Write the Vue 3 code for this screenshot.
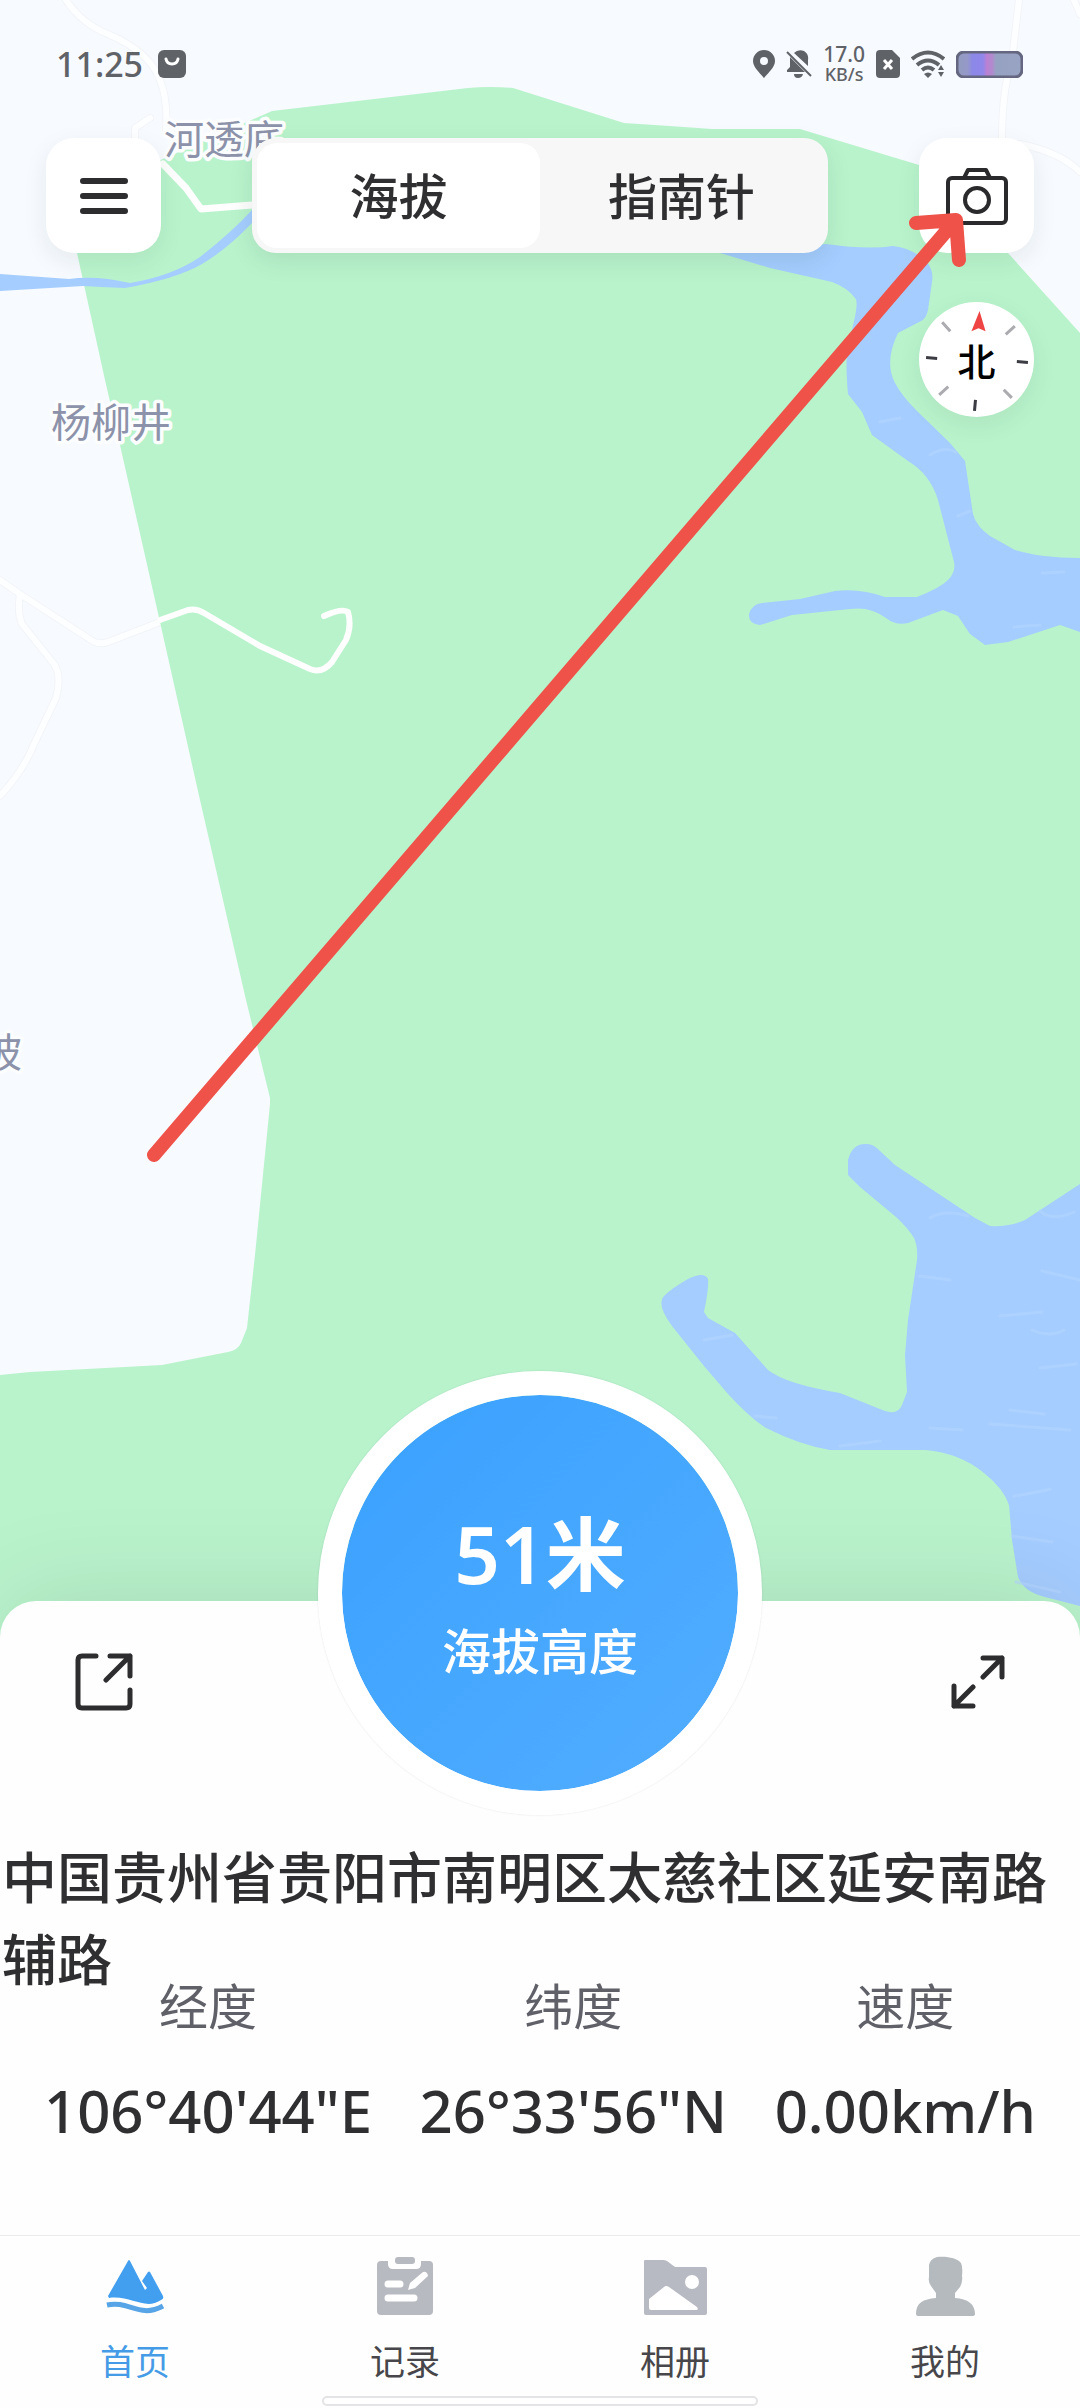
<script setup>
import { ref } from 'vue'

const modes = ['海拔', '指南针']
const mode = ref('海拔')

const metrics = [
  { label: '经度', value: '106°40\'44"E' },
  { label: '纬度', value: '26°33\'56"N' },
  { label: '速度', value: '0.00km/h' },
]

const tabs = [
  { id: 'home', label: '首页' },
  { id: 'log', label: '记录' },
  { id: 'album', label: '相册' },
  { id: 'me', label: '我的' },
]
const activeTab = ref('home')
</script>

<template>
  <div class="app">
    <main class="map-area">
      <svg class="map" viewBox="0 0 1080 1660" preserveAspectRatio="xMidYMin slice" aria-hidden="true">
        <rect width="1080" height="1660" fill="#f7faff" />
        <!-- faint roads outside the park -->
        <g fill="none" stroke-linejoin="round" stroke-linecap="round">
          <g stroke="#f2f4f8" stroke-width="8">
            <path d="M66 0Q82 24 108 34Q150 52 160 80Q168 100 166 130M150 118L135 128V140" />
            <path d="M1019 0L1012 60Q1002 90 1002 140M1020 144Q1060 152 1080 172M1074 0L1080 14" />
            <path d="M0 580L20 594L88 638Q98 646 108 642L160 622M20 594Q17 612 22 624L54 664Q62 676 56 698L34 744Q24 770 0 796" />
          </g>
          <g stroke="#fdfeff" stroke-width="6">
            <path d="M66 0Q82 24 108 34Q150 52 160 80Q168 100 166 130M150 118L135 128V140" />
            <path d="M1019 0L1012 60Q1002 90 1002 140M1020 144Q1060 152 1080 172M1074 0L1080 14" />
            <path d="M0 580L20 594L88 638Q98 646 108 642L160 622M20 594Q17 612 22 624L54 664Q62 676 56 698L34 744Q24 770 0 796" />
          </g>
        </g>
        <!-- park -->
        <path fill="#b9f3cc" d="M272 111L468 88Q490 86 513 88L624 123Q670 126 712 129H800L919 165L1008 253L1080 333V1660H0V1375L30 1372L162 1365L228 1352Q238 1350 241 1343L247 1328L255 1255L270 1104V1098L246 1000L200 800L160 622L120 445L105 380L77 253L72 200L165 158L240 125Z" />
        <g fill="none" stroke="#fdfefd" stroke-linejoin="round" stroke-linecap="round">
          <path stroke-width="7" d="M163 164L186 188L201 209L252 205" />
          <path stroke-width="6" d="M160 620L188 610Q196 608 204 613L260 646L310 669Q322 674 332 662L346 640Q352 626 348 612Q342 608 324 616" />
        </g>
        <!-- water -->
        <g fill="#a5cdff">
          <path d="M0 274L69 279Q95 275 130 283Q172 276 200 257Q232 232 252 210V223Q226 250 202 264Q176 279 125 288Q100 287 83 286L0 291Z" />
          <path d="M720 253L826 244Q868 250 893 246Q912 248 926 261Q934 270 932 282L928 310Q926 319 921 321L898 333Q884 362 895 383Q902 396 916 410L950 443L965 461L973 514Q976 526 990 536L1015 550Q1040 558 1080 558V632L1060 625L1008 642L985 645L970 634L958 616L943 610L908 623Q896 626 886 618Q870 606 850 609L792 615L760 625Q748 624 749 614Q752 604 762 603L800 599L835 591Q860 588 885 597H917Q940 588 948 580Q956 572 954 562L938 500Q930 474 908 461L872 435L862 412L848 394Q845 360 848 350L853 325Q859 302 855 298Q848 288 832 282L770 268Z" />
          <path d="M848 1160Q852 1144 865 1144Q873 1143 880 1151L895 1165L975 1218L990 1226Q1010 1227 1025 1220L1080 1184V1606L1045 1597Q1024 1592 1018 1577L1012 1540L1009 1505Q1004 1489 984 1473Q960 1453 925 1450H830Q800 1445 766 1428Q750 1418 728 1394L704 1366L672 1326Q656 1304 664 1296Q672 1288 688 1279Q704 1271 708 1279Q709 1288 704 1312L708 1318L735 1333L768 1370Q786 1384 840 1393L885 1411Q898 1415 902 1405L907 1392L905 1355L908 1320L917 1260Q918 1246 914 1238Q908 1228 896 1217L860 1187L848 1175Z" />
        </g>
        <g fill="none" stroke="#b4d6ff" stroke-width="3" stroke-linecap="round" opacity="0.6">
          <path d="M930 1218Q945 1209 968 1216M1040 1211Q1052 1222 1074 1212M920 1276L950 1280M1042 1271L1080 1280M1000 1316L1042 1312M1040 1368L1076 1364M1010 1410L1044 1414M930 1428L962 1430M990 1424L1070 1430M704 1340L732 1335M755 1416L776 1418M840 1446L880 1441M1014 1496Q1030 1494 1050 1489M1012 1536L1052 1542M1016 1582L1060 1592M1032 1330Q1050 1338 1064 1330M930 455Q944 446 956 452M1042 573L1064 572M958 516L970 511M880 422L900 418M1014 627L1040 625" />
        </g>
        <g class="place">
          <text x="164" y="154">河透底</text>
          <text x="51" y="437">杨柳井</text>
          <text x="-18" y="1067">坡</text>
        </g>
      </svg>

      <header class="overlay">
        <div class="status">
          <div class="status-side">
            <span class="clock">11:25</span>
            <svg width="28" height="28" viewBox="0 0 28 28"><rect width="28" height="28" rx="6" fill="#5f6267" /><path d="M8 9Q9 14 14 14T20 9" fill="none" stroke="#fff" stroke-width="3" stroke-linecap="round" /></svg>
          </div>
          <div class="status-side icons">
            <svg width="22" height="28" viewBox="0 0 22 28"><path fill="#5f6267" fill-rule="evenodd" d="M11 0A11 11 0 0 1 22 11C22 17 16 22 11 28C6 22 0 17 0 11A11 11 0 0 1 11 0ZM11 7A4 4 0 1 0 11 15A4 4 0 1 0 11 7Z" /></svg>
            <svg width="26" height="28" viewBox="0 0 26 28"><path fill="#5f6267" d="M8 3Q12 -1 18 1Q23 4 22 10V16ZM4 7L19 22H1V20L4 17ZM8 24H17Q16 28 12 28T8 24Z" /><path d="M1 2L25 26" stroke="#5f6267" stroke-width="2" /></svg>
            <span class="speed"><b>17.0</b><small>KB/s</small></span>
            <svg width="24" height="28" viewBox="0 0 24 28"><path fill="#5f6267" d="M4 0H16L24 8V24Q24 28 20 28H4Q0 28 0 24V4Q0 0 4 0Z" /><path d="M8 10L16 19M16 10L8 19" stroke="#fff" stroke-width="3" /></svg>
            <svg width="34" height="28" viewBox="0 0 34 28"><g fill="none" stroke="#5f6267" stroke-width="4"><path d="M1 9Q17 -4 33 9" /><path d="M6 15Q17 6 28 15" /><path d="M11 20Q17 15 23 20" /></g><path fill="#5f6267" d="M13 24Q17 21 21 24L17 28ZM27 20L30 15L33 20ZM27 22H33L30 27Z" /></svg>
            <svg width="67" height="27" viewBox="0 0 67 27">
              <defs><linearGradient id="charge"><stop offset="0" stop-color="#949cc0" /><stop offset="0.16" stop-color="#9499c8" /><stop offset="0.24" stop-color="#8b88e8" /><stop offset="0.4" stop-color="#9187ea" /><stop offset="0.46" stop-color="#bb80d2" /><stop offset="0.54" stop-color="#b18ace" /><stop offset="0.6" stop-color="#96a2c2" /><stop offset="1" stop-color="#99a3c4" /></linearGradient></defs>
              <rect x="1" y="1" width="65" height="25" rx="7" fill="url(#charge)" stroke="#64677f" stroke-width="3" />
            </svg>
          </div>
        </div>

        <div class="toolbar">
          <button class="square" aria-label="菜单">
            <svg width="48" height="36" viewBox="0 0 48 36"><path d="M3 3H45M3 18H45M3 33H45" stroke="#2d2d2f" stroke-width="6" stroke-linecap="round" /></svg>
          </button>
          <div class="modes">
            <button v-for="m in modes" :key="m" :class="{ on: m === mode }" @click="mode = m">{{ m }}</button>
          </div>
          <button class="square" aria-label="相机">
            <svg width="62" height="58" viewBox="0 0 62 58" fill="none" stroke="#2a2a2c" stroke-width="4"><rect x="2" y="11" width="58" height="45" rx="4" /><path d="M18 11L22 3H40L44 11" stroke-linejoin="round" /><circle cx="31" cy="33" r="12" /></svg>
          </button>
        </div>

        <button class="compass" aria-label="指北针">
          <svg class="dial" viewBox="0 0 114 114">
            <path d="M60 9L66 29L59 26L52 29Z" fill="#ef4444" />
            <g stroke-width="3"><path d="M7 55L18 56M97 59L108 60M56 97L55 108" stroke="#3c3c44" /><path d="M23 20L31 29M95 24L86 32M29 84L20 92M84 87L92 95" stroke="#ababb0" /></g>
          </svg>
          <span>北</span>
        </button>
      </header>
    </main>

    <section class="sheet">
      <div class="actions">
        <button aria-label="分享">
          <svg width="58" height="58" viewBox="0 0 58 58" fill="none" stroke="#2d2d2f" stroke-width="5" stroke-linecap="round" stroke-linejoin="round"><path d="M21 3H7Q3 3 3 7V51Q3 55 7 55H51Q55 55 55 51V37M35 3H55V23M55 3L31 27" /></svg>
        </button>
        <button aria-label="全屏">
          <svg width="54" height="54" viewBox="0 0 54 54" fill="none" stroke="#2d2d2f" stroke-width="5" stroke-linecap="round" stroke-linejoin="round"><path d="M32 3H51V22M51 3L32 22M3 31V51H22M3 51L22 32" /></svg>
        </button>
      </div>
      <div class="altitude">
        <strong>51米</strong>
        <span>海拔高度</span>
      </div>
      <p class="address">中国贵州省贵阳市南明区太慈社区延安南路辅路</p>
      <dl class="metrics">
        <div v-for="m in metrics" :key="m.label">
          <dt>{{ m.label }}</dt>
          <dd>{{ m.value }}</dd>
        </div>
      </dl>
    </section>

    <nav class="tabbar">
      <a v-for="t in tabs" :key="t.id" href="#" :class="{ on: t.id === activeTab }" @click.prevent="activeTab = t.id">
        <svg v-if="t.id === 'home'" width="64" height="64" viewBox="0 0 64 64"><path fill="#429fef" d="M25 7Q26 5 27 7L42 36L44 34L39 27L45 18Q46 17 47 18L60 42Q61 45 58 46C42 57 28 41 6 44L5 42Z" /><path d="M4 51C26 46 36 65 60 52" fill="none" stroke="#57a4e6" stroke-width="5" /></svg>
        <svg v-else-if="t.id === 'log'" width="64" height="64" viewBox="0 0 64 64"><path fill="#b8bac1" d="M8 7H15V10Q15 15 20 15H43Q48 15 48 10V7H56Q60 7 60 11V57Q60 61 56 61H8Q4 61 4 57V11Q4 7 8 7Z" /><rect x="22" y="3" width="20" height="7" rx="3" fill="#b8bac1" /><path d="M15 30H27M15 44H41" stroke="#fff" stroke-width="7" stroke-linecap="round" /><path d="M35 36L37 29L50 18Q54 17 55 22L42 34Z" fill="#fff" /></svg>
        <svg v-else-if="t.id === 'album'" width="64" height="64" viewBox="0 0 64 64"><path fill="#b7bac2" d="M2 6H20Q22 6 24 7L32 13H62Q64 13 64 15V59Q64 61 62 61H3Q1 61 1 59V7Q1 6 2 6Z" /><circle cx="49" cy="28" r="7" fill="#fff" /><path d="M6 45L21 33Q23 31 26 33L54 53Q56 56 53 56H8Q6 56 6 54Z" fill="#fff" /></svg>
        <svg v-else width="64" height="64" viewBox="0 0 64 64"><path fill="#b5babf" d="M24 3C34 2 44 4 48 9Q50 13 49 22Q50 27 47 33L42 39V44C55 45 62 50 62 60Q62 62 59 62H5Q3 62 3 60C3 49 10 45 23 44V39L18 32Q15 28 16 23V11Q17 5 24 3Z" /></svg>
        <span>{{ t.label }}</span>
      </a>
      <i class="home-indicator"></i>
    </nav>

    <svg class="annotation" viewBox="0 0 1080 1660" preserveAspectRatio="xMidYMin slice" aria-hidden="true">
      <path d="M154 1155L955 221M916 223L956 220L959 260" fill="none" stroke="#ef5249" stroke-width="14" stroke-linecap="round" stroke-linejoin="round" />
    </svg>
  </div>
</template>

<style>
body {
  background: #fff;
}
</style>

<style scoped>
.app {
  position: relative;
  display: flex;
  flex-direction: column;
  min-height: 100vh;
  overflow: hidden;
  background: #fefefe;
  color: #2f2f31;
  font-family: "Noto Sans", "Noto Sans CJK SC", sans-serif;
}

button {
  padding: 0;
  border: 0;
  background: none;
  color: inherit;
  font: inherit;
  cursor: pointer;
}

svg {
  display: block;
}

.map-area {
  position: relative;
  flex: 1;
}

.map,
.annotation {
  position: absolute;
  top: 0;
  left: 0;
  width: 100%;
  height: 1660px;
}

.annotation {
  pointer-events: none;
}

.place {
  fill: #8c92a9;
  stroke: #fbfdff;
  stroke-width: 7px;
  stroke-linejoin: round;
  paint-order: stroke;
  font-size: 40px;
  font-family: "Noto Sans CJK SC", sans-serif;
}

.overlay {
  position: relative;
  display: flex;
  flex-direction: column;
  padding: 44px 46px 0;
}

.status {
  display: flex;
  justify-content: space-between;
  align-items: center;
  height: 40px;
  padding: 0 11px 0 10px;
  color: #5f6267;
}

.status-side {
  display: flex;
  align-items: center;
  gap: 15px;
}

.status-side.icons {
  gap: 11px;
}

.clock {
  font-size: 34px;
  font-weight: 500;
}

.speed {
  display: flex;
  flex-direction: column;
  align-items: center;
  line-height: 20px;
}

.speed b {
  font-size: 21px;
  font-weight: 500;
}

.speed small {
  font-size: 18px;
  font-weight: 500;
}

.toolbar {
  display: flex;
  justify-content: space-between;
  align-items: center;
  margin-top: 54px;
}

.square,
.compass {
  display: flex;
  align-items: center;
  justify-content: center;
  width: 115px;
  height: 115px;
  background: #fff;
  box-shadow: 0 8px 24px rgba(20, 60, 40, 0.08);
}

.square {
  border-radius: 28px;
}

.modes {
  display: flex;
  width: 576px;
  height: 115px;
  box-sizing: border-box;
  padding: 5px;
  border-radius: 24px;
  background: #f7f7f7;
  box-shadow: 0 8px 24px rgba(20, 60, 40, 0.1);
}

.modes button {
  flex: 1;
  border-radius: 20px;
  font-size: 49px;
  font-weight: 500;
  line-height: 60px;
}

.modes .on {
  background: #fff;
}

.compass {
  position: relative;
  align-self: flex-end;
  margin-top: 49px;
  border-radius: 50%;
  color: #000;
  font-size: 38px;
  font-weight: 500;
}

.dial {
  position: absolute;
  inset: 0;
}

.sheet {
  position: relative;
  padding-top: 52px;
  padding-bottom: 88px;
  border-radius: 36px 36px 0 0;
  background: #fefefe;
  box-shadow: 0 -10px 100px rgba(0, 0, 0, 0.09);
}

.actions {
  display: flex;
  justify-content: space-between;
  align-items: center;
  padding: 0 75px;
}

.altitude {
  position: absolute;
  top: -230px;
  left: 50%;
  display: flex;
  flex-direction: column;
  align-items: center;
  justify-content: center;
  width: 444px;
  height: 444px;
  box-sizing: border-box;
  margin-left: -222px;
  padding-top: 16px;
  border: 24px solid #fff;
  border-radius: 50%;
  background: linear-gradient(135deg, #3aa1ff, #52adff) padding-box;
  box-shadow: 0 0 2px rgba(60, 60, 90, 0.16);
  color: #fff;
}

.altitude strong {
  font-size: 80px;
  font-weight: 600;
  line-height: 100px;
}

.altitude span {
  font-size: 49px;
  font-weight: 500;
  line-height: 96px;
}

.address {
  margin: 125px 0 0;
  padding-left: 2px;
  font-size: 55px;
  font-weight: 500;
  line-height: 82px;
}

.metrics {
  display: flex;
  justify-content: space-between;
  margin: -24px 0 0;
  padding: 0 44px;
  text-align: center;
}

.metrics dt {
  color: #5f6068;
  font-size: 49px;
  line-height: 60px;
}

.metrics dd {
  margin: 39px 0 0;
  font-size: 58px;
  font-weight: 500;
  line-height: 72px;
}

.tabbar {
  position: relative;
  display: flex;
  padding: 18px 0 24px;
  border-top: 1px solid #ececee;
  background: #fefefe;
}

.tabbar a {
  display: flex;
  flex: 1;
  flex-direction: column;
  align-items: center;
  gap: 22px;
  color: #47474b;
  font-size: 35px;
  line-height: 44px;
  text-decoration: none;
}

.tabbar .on {
  color: #459be6;
}

.home-indicator {
  position: absolute;
  bottom: 2px;
  left: 50%;
  width: 436px;
  height: 10px;
  box-sizing: border-box;
  margin-left: -218px;
  border: 2px solid #e4e4e6;
  border-radius: 5px;
  background: #fff;
}
</style>
